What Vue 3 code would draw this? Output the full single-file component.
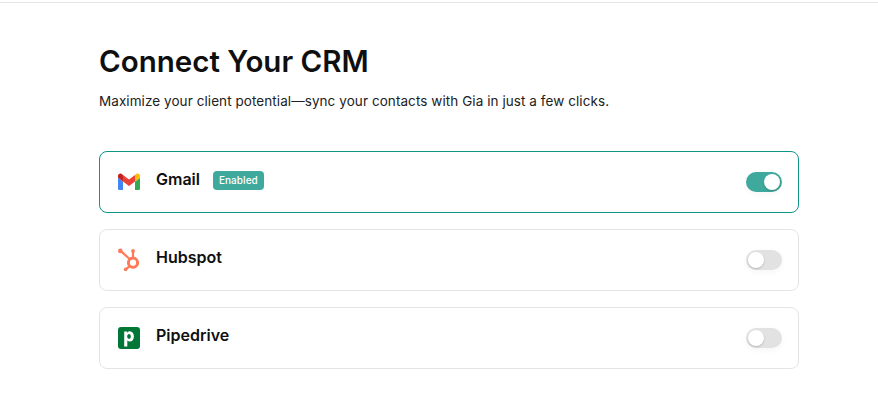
<script setup>
const rows = [
  { name: 'Gmail', icon: 'gmail', on: true },
  { name: 'Hubspot', icon: 'hubspot', on: false },
  { name: 'Pipedrive', icon: 'pipedrive', on: false }
]
</script>

<template>
  <div class="page">
    <main class="content">
      <h1 class="title">Connect Your CRM</h1>
      <p class="sub">Maximize your client potential—sync your contacts with Gia in just a few clicks.</p>
      <ul class="list">
        <li v-for="r in rows" :key="r.name" class="row" :class="{ active: r.on }">
          <span class="icon">
            <svg v-if="r.icon === 'gmail'" width="24" height="24" viewBox="0 0 24 24">
              <path d="M2.6 20H6V11.5L1 7.8V18.4C1 19.3 1.7 20 2.6 20Z" fill="#4285F4"/>
              <path d="M18 20H21.4C22.3 20 23 19.3 23 18.4V7.8L18 11.5Z" fill="#34A853"/>
              <path d="M18 5V11.5L23 7.8V5.8C23 3.9 20.8 2.8 19.3 4Z" fill="#FBBC04"/>
              <path d="M6 11.5V5L12 9.5L18 5V11.5L12 16Z" fill="#EA4335"/>
              <path d="M1 5.8V7.8L6 11.5V5L4.7 4C3.2 2.8 1 3.9 1 5.8Z" fill="#C5221F"/>
            </svg>
            <svg v-else-if="r.icon === 'hubspot'" width="24" height="24" viewBox="0 0 24 24">
              <g fill="none" stroke="#FF7A59" stroke-width="2.2">
                <circle cx="16" cy="14.7" r="4.6" stroke-width="3"/>
                <path d="M16 9V3.5"/>
                <path d="M3.7 2.9L12.6 11"/>
                <path d="M12.6 18.4L8.6 21.4"/>
              </g>
              <circle cx="16" cy="3" r="1.9" fill="#FF7A59"/>
              <circle cx="3.3" cy="2.9" r="2.3" fill="#FF7A59"/>
              <circle cx="8.6" cy="21.4" r="1.8" fill="#FF7A59"/>
            </svg>
            <svg v-else width="24" height="24" viewBox="0 0 24 24">
              <rect x="1" y="1" width="22" height="22" rx="3" fill="#017737"/>
              <path fill-rule="evenodd" d="M7.2 5.6H10.1V6.8C10.8 5.9 11.7 5.3 12.9 5.3C15.3 5.3 16.9 7.4 16.9 10.4C16.9 13.4 15.2 15.5 12.8 15.5C11.8 15.5 10.9 15.1 10.3 14.4V20.6H7.2ZM12.1 8.1C11 8.1 10.2 9 10.2 10.4C10.2 11.8 11 12.7 12.1 12.7C13.1 12.7 13.8 11.8 13.8 10.4C13.8 9 13.1 8.1 12.1 8.1Z" fill="#fff"/>
            </svg>
          </span>
          <span class="name">{{ r.name }}</span>
          <span v-if="r.on" class="badge">Enabled</span>
          <span class="toggle" :class="{ on: r.on }"><span class="knob"></span></span>
        </li>
      </ul>
    </main>
  </div>
</template>

<style>
html, body { margin: 0; background: #fff; }
</style>

<style scoped>
.page {
  height: 401px;
  box-sizing: border-box;
  padding-top: 2px;
  overflow: hidden;
  background: #fff;
  font-family: Inter, "Noto Sans", sans-serif;
  color: #0f0f0f;
}
.page::before {
  content: "";
  display: block;
  height: 1px;
  background: #e6e6e6;
}
.content {
  width: 700px;
  margin-left: 99px;
  padding-top: 40px;
}
.title {
  margin: 0;
  font-size: 29.5px;
  line-height: 36px;
  font-weight: 600;
}
.sub {
  margin: 12px 0 0;
  font-size: 13.5px;
  line-height: 20px;
  letter-spacing: 0.07px;
  color: #222;
}
.list {
  list-style: none;
  margin: 40px 0 0;
  padding: 0;
  display: flex;
  flex-direction: column;
  gap: 16px;
}
.row {
  height: 62px;
  box-sizing: border-box;
  border: 1px solid #e4e4e4;
  border-radius: 8px;
  display: flex;
  align-items: center;
  padding: 0 16px 0 17px;
}
.row.active { border-color: #0f9488; }
.icon { width: 24px; height: 24px; display: block; }
.icon svg { display: block; }
.name {
  margin-left: 15px;
  margin-top: -6px;
  font-size: 16px;
  font-weight: 600;
}
.badge {
  margin-left: 13px;
  margin-top: -4px;
  height: 19px;
  padding: 0 6px;
  display: flex;
  align-items: center;
  border-radius: 4px;
  background: #3ea99c;
  color: #fff;
  font-size: 10px;
  font-weight: 500;
  letter-spacing: 0.05px;
}
.toggle {
  margin-left: auto;
  width: 36px;
  height: 20px;
  border-radius: 10px;
  background: #e2e2e2;
  display: flex;
  align-items: center;
  padding: 0 2px;
  box-sizing: border-box;
  box-shadow: 0 2px 6px rgba(0,0,0,.04);
}
.toggle.on { background: #3ea99c; justify-content: flex-end; }
.knob {
  width: 16px;
  height: 16px;
  border-radius: 50%;
  background: #fff;
  box-shadow: 0 1px 2px rgba(0,0,0,.2);
}
</style>
